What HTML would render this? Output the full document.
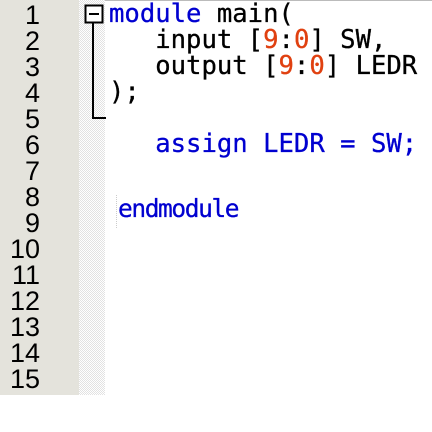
<!DOCTYPE html>
<html><head><style>
body{margin:0;width:432px;height:432px;background:#fff;position:relative;overflow:hidden}
#top{position:absolute;left:0;top:0;width:432px;height:1px;background:#bbb}
#gut{position:absolute;left:0;top:0;width:79px;height:395px;background:#e4e3dc}
#fold{position:absolute;left:79px;top:0;width:26px;height:395px;
background-color:#fff;background-image:repeating-conic-gradient(#e2e2e2 0 25%,#fff 0 50%);background-size:2px 2px}
.num{position:absolute;font:27px/26px "Liberation Sans",sans-serif;color:#000;text-align:right}
.code{position:absolute;left:109px;font:25.6px/26px "DejaVu Sans Mono",monospace;white-space:pre;color:#000;-webkit-text-stroke:0.3px currentColor}
.k{color:#0000d0}.n{color:#e04010}
</style></head><body>
<div id="top"></div>
<div id="gut"></div><div id="fold"></div>
<div class="num" style="top:2px;width:40px;left:0">1</div>
<div class="num" style="top:28px;width:40px;left:0">2</div>
<div class="num" style="top:54px;width:40px;left:0">3</div>
<div class="num" style="top:80px;width:40px;left:0">4</div>
<div class="num" style="top:106px;width:40px;left:0">5</div>
<div class="num" style="top:132px;width:40px;left:0">6</div>
<div class="num" style="top:158px;width:40px;left:0">7</div>
<div class="num" style="top:184px;width:40px;left:0">8</div>
<div class="num" style="top:210px;width:40px;left:0">9</div>
<div class="num" style="top:236px;width:40px;left:0">10</div>
<div class="num" style="top:262px;width:40px;left:0">11</div>
<div class="num" style="top:288px;width:40px;left:0">12</div>
<div class="num" style="top:314px;width:40px;left:0">13</div>
<div class="num" style="top:340px;width:40px;left:0">14</div>
<div class="num" style="top:366px;width:40px;left:0">15</div>
<svg style="position:absolute;left:0;top:0" width="432" height="432">
<rect x="85.5" y="5.5" width="17" height="17" fill="#fff" stroke="#000" stroke-width="2"/>
<line x1="89" y1="14" x2="99" y2="14" stroke="#000" stroke-width="2"/>
<line x1="93" y1="23" x2="93" y2="118" stroke="#000" stroke-width="2"/>
<line x1="92" y1="118" x2="106" y2="118" stroke="#000" stroke-width="2"/>
<line x1="116.5" y1="195" x2="116.5" y2="228" stroke="#ccc" stroke-width="1" stroke-dasharray="1 1"/>
</svg>
<div class="code" style="top:1px"><span class="k">module</span> main(</div>
<div class="code" style="top:27px">   input [<span class="n">9</span>:<span class="n">0</span>] SW,</div>
<div class="code" style="top:53px">   output [<span class="n">9</span>:<span class="n">0</span>] LEDR</div>
<div class="code" style="top:79px">);</div>
<div class="code" style="top:131px"><span class="k">   assign LEDR = SW;</span></div>
<div class="code k" style="top:196px;left:118px;font-size:24.5px;letter-spacing:-1.4px">endmodule</div>
</body></html>
